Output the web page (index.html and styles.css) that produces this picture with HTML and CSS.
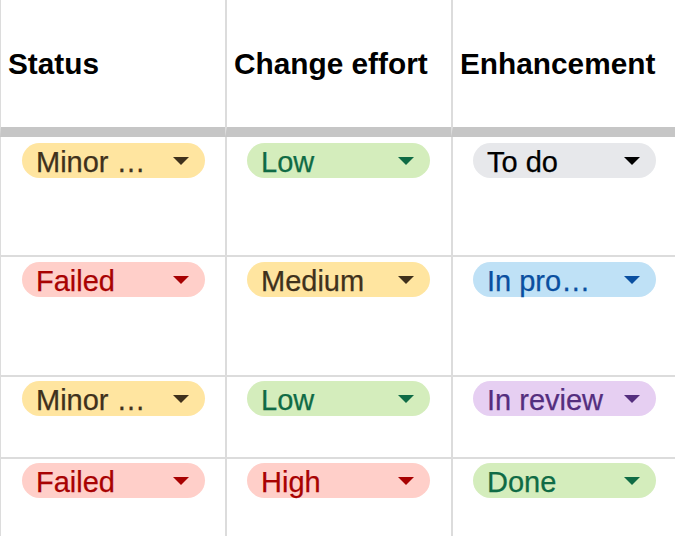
FILE: index.html
```html
<!DOCTYPE html>
<html lang="en">
<head>
<meta charset="utf-8">
<title>Sheet</title>
<link rel="stylesheet" href="styles.css">
</head>
<body>
<div class="sheet">
  <div class="cell head">Status</div>
  <div class="cell head">Change effort</div>
  <div class="cell head">Enhancement</div>

  <div class="cell row first"><span class="chip yellow"><span class="label">Minor …</span><span class="arrow"></span></span></div>
  <div class="cell row first"><span class="chip green"><span class="label">Low</span><span class="arrow"></span></span></div>
  <div class="cell row first"><span class="chip grey"><span class="label">To do</span><span class="arrow"></span></span></div>

  <div class="cell row tall"><span class="chip red"><span class="label">Failed</span><span class="arrow"></span></span></div>
  <div class="cell row tall"><span class="chip yellow"><span class="label">Medium</span><span class="arrow"></span></span></div>
  <div class="cell row tall"><span class="chip blue"><span class="label">In pro…</span><span class="arrow"></span></span></div>

  <div class="cell row short"><span class="chip yellow"><span class="label">Minor …</span><span class="arrow"></span></span></div>
  <div class="cell row short"><span class="chip green"><span class="label">Low</span><span class="arrow"></span></span></div>
  <div class="cell row short"><span class="chip purple"><span class="label">In review</span><span class="arrow"></span></span></div>

  <div class="cell row last"><span class="chip red"><span class="label">Failed</span><span class="arrow"></span></span></div>
  <div class="cell row last"><span class="chip red"><span class="label">High</span><span class="arrow"></span></span></div>
  <div class="cell row last"><span class="chip green"><span class="label">Done</span><span class="arrow"></span></span></div>
</div>
</body>
</html>
```

FILE: styles.css
```css
html, body {
  margin: 0;
  padding: 0;
  background: #ffffff;
  overflow: hidden;
}

.sheet {
  display: grid;
  grid-template-columns: 225px 226px 226px;
  font-family: "Liberation Sans", Arial, sans-serif;
  width: 677px;
}

.cell {
  box-sizing: border-box;
  border-left: 2px solid #dcdcdc;
  border-bottom: 2px solid #dcdcdc;
}

.cell:nth-child(3n+1) {
  border-left-width: 1px;
  padding-left: 7px;
}

.head {
  height: 137px;
  border-bottom: 10px solid #c6c6c6;
  display: flex;
  align-items: center;
  padding-left: 7px;
  font-weight: bold;
  font-size: 29.8px;
  color: #000;
}

.row {
  padding: 5px 0 0 20px;
}

.row.cell:nth-child(3n+1) {
  padding-left: 21px;
}

.first { height: 120px; padding-top: 6px; }
.tall { height: 120px; }
.short { height: 82px; padding-top: 4px; }
.last { height: 100px; padding-top: 4px; }

.chip {
  box-sizing: border-box;
  display: flex;
  align-items: center;
  justify-content: space-between;
  width: 183px;
  height: 35px;
  border-radius: 18px;
  padding: 0 16px 0 14px;
  font-size: 29px;
}

.label {
  line-height: 32px;
  padding-top: 3px;
  white-space: nowrap;
  -webkit-text-stroke: 0.25px currentColor;
}

.arrow {
  width: 0;
  height: 0;
  border-left: 8px solid transparent;
  border-right: 8px solid transparent;
  border-top: 8px solid currentColor;
}

.yellow { background: #ffe5a0; color: #3f311c; }
.green { background: #d4edbc; color: #0f6b45; }
.red { background: #ffcfc9; color: #a80202; }
.grey { background: #e7e8eb; color: #000000; }
.blue { background: #bfe1f6; color: #0a4fa0; }
.purple { background: #e6cff2; color: #542e7e; }
```
